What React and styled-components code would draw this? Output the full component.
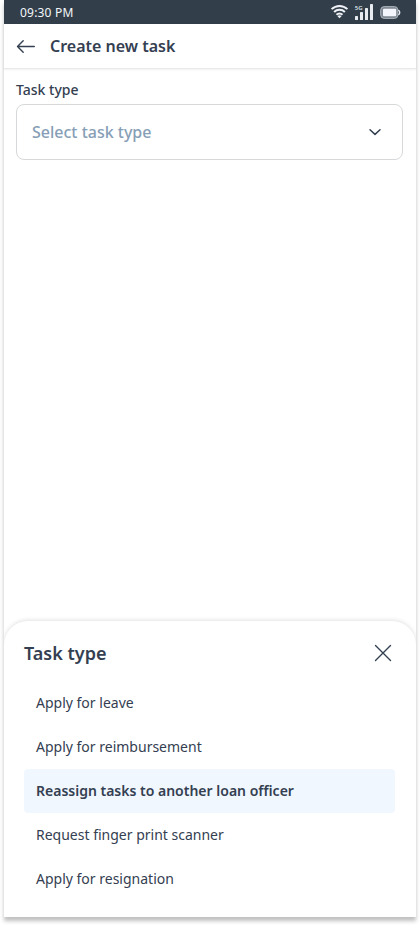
import React, { useState } from "react";
import styled, { createGlobalStyle } from "styled-components";

const GlobalStyle = createGlobalStyle`
  * { box-sizing: border-box; }
  body {
    margin: 0;
    background: #fff;
    color: #344051;
    font-family: "Noto Sans", sans-serif;
  }
  button { font: inherit; color: inherit; border: 0; background: none; padding: 0; text-align: left; }
  svg { display: block; flex: none; }
`;

const Page = styled.div`
  height: 925px;
  padding: 0 4px;
  overflow: hidden;
`;

const Phone = styled.main`
  display: flex;
  flex-direction: column;
  width: 412px;
  height: 917px;
  background: #fff;
  box-shadow: 0 4px 4px rgba(0, 0, 0, 0.25);
`;

const StatusBar = styled.div`
  display: flex;
  justify-content: space-between;
  height: 24px;
  padding: 1px 15px 0 16px;
  background: #323e4a;
  color: #f3f6fa;
  font-size: 12px;
  line-height: 23px;
  letter-spacing: 0.2px;
`;

const StatusIcons = styled.div`
  display: flex;
  height: 22px;
`;

const Header = styled.header`
  display: flex;
  align-items: center;
  gap: 14px;
  height: 45px;
  padding: 0 12px;
  border-bottom: 1px solid #e9e9e9;
  box-shadow: 0 1px 2px rgba(0, 0, 0, 0.06);
`;

const Title = styled.h1`
  margin: 0;
  font-size: 16px;
  line-height: 24px;
  font-weight: 600;
`;

const Form = styled.section`
  display: flex;
  flex: 1;
  flex-direction: column;
  gap: 4px;
  padding: 11px 13px 0 12px;
`;

const Label = styled.span`
  font-size: 14px;
  line-height: 20px;
  font-weight: 500;
`;

const SelectField = styled.button`
  display: flex;
  align-items: center;
  justify-content: space-between;
  height: 56px;
  padding: 0 17px 0 15px;
  border: 1px solid #d6d8da;
  border-radius: 8px;
  color: #869eb6;
  font-size: 16px;
  font-weight: 500;
`;

const Sheet = styled.section`
  height: 296px;
  padding: 19px 21px 0 20px;
  border-radius: 24px 24px 0 0;
  background: #fff;
  box-shadow: 0 -1px 4px rgba(0, 0, 0, 0.12);
  clip-path: inset(-6px 0 0 0);
`;

const SheetHeader = styled.div`
  display: flex;
  align-items: center;
  justify-content: space-between;
  height: 26px;
  margin-bottom: 15px;
`;

const SheetTitle = styled.h2`
  margin: 0;
  font-size: 18px;
  line-height: 26px;
  font-weight: 600;
`;

const Options = styled.div`
  display: flex;
  flex-direction: column;
`;

const Option = styled.button`
  height: 44px;
  padding: 0 12px;
  border-radius: 4px;
  background: ${({ $selected }) => ($selected ? "#f0f7ff" : "transparent")};
  font-size: 14px;
  line-height: 20px;
  font-weight: ${({ $selected }) => ($selected ? 600 : 400)};
`;

const TinyLabel = styled.text`
  font-family: "Noto Sans", sans-serif;
  font-size: 6px;
  font-weight: 600;
  letter-spacing: 0;
  fill: #dfe4e9;
`;

const taskTypes = [
  "Apply for leave",
  "Apply for reimbursement",
  "Reassign tasks to another loan officer",
  "Request finger print scanner",
  "Apply for resignation",
];

const SystemIcons = () => (
  <svg width="72" height="22" viewBox="329 1 72 22" fill="none">
    <g stroke="#eef1f5" strokeWidth="2">
      <path d="M331.6 9.1a11.3 11.3 0 0 1 15.8 0" />
      <path d="M334.1 12a7.7 7.7 0 0 1 10.8 0" />
      <path d="M336.5 14.8a4.3 4.3 0 0 1 6 0" />
    </g>
    <path d="m337.5 16.3 2 2 2-2a2.8 2.8 0 0 0-4 0Z" fill="#eef1f5" />
    <g fill="#e8ecf1">
      <rect x="355" y="16" width="3" height="4" rx=".6" />
      <rect x="360" y="12" width="3" height="8" rx=".6" />
      <rect x="365" y="8" width="3" height="12" rx=".6" />
      <rect x="370" y="4" width="3" height="16" rx=".6" />
    </g>
    <TinyLabel x="354.8" y="10">5G</TinyLabel>
    <rect x="380.7" y="6.6" width="17.2" height="11.8" rx="3.5" fill="#7d8791" stroke="#abb3bc" />
    <rect x="383" y="8.8" width="13.2" height="7.5" rx="1" fill="#f3f7fd" />
    <path d="M398.3 10.1c1.9 1 1.9 3.9 0 4.9" stroke="#e5e9ef" strokeWidth="1.4" />
  </svg>
);

const BackIcon = () => (
  <svg width="20" height="20" fill="none" stroke="#344051" strokeWidth="1.4" strokeLinecap="round" strokeLinejoin="round">
    <path d="M18.3 10.5H1.5M7.2 4.8 1.5 10.5l5.7 5.7" />
  </svg>
);

const ChevronIcon = () => (
  <svg width="20" height="20" fill="none" stroke="#344051" strokeWidth="1.5" strokeLinecap="round" strokeLinejoin="round">
    <path d="m5 7.7 5 4.7 5-4.7" />
  </svg>
);

const CloseIcon = () => (
  <svg width="24" height="24" fill="none" stroke="#344051" strokeWidth="1.4" strokeLinecap="round">
    <path d="m4.5 4.5 15 15m0-15-15 15" />
  </svg>
);

export default function App() {
  const [selected, setSelected] = useState(taskTypes[2]);

  return (
    <Page>
      <GlobalStyle />
      <Phone>
        <StatusBar>
          <span>09:30 PM</span>
          <StatusIcons><SystemIcons /></StatusIcons>
        </StatusBar>
        <Header>
          <button aria-label="Back"><BackIcon /></button>
          <Title>Create new task</Title>
        </Header>
        <Form>
          <Label>Task type</Label>
          <SelectField>
            Select task type
            <ChevronIcon />
          </SelectField>
        </Form>
        <Sheet>
          <SheetHeader>
            <SheetTitle>Task type</SheetTitle>
            <button aria-label="Close"><CloseIcon /></button>
          </SheetHeader>
          <Options>
            {taskTypes.map((type) => (
              <Option key={type} $selected={type === selected} onClick={() => setSelected(type)}>
                {type}
              </Option>
            ))}
          </Options>
        </Sheet>
      </Phone>
    </Page>
  );
}
